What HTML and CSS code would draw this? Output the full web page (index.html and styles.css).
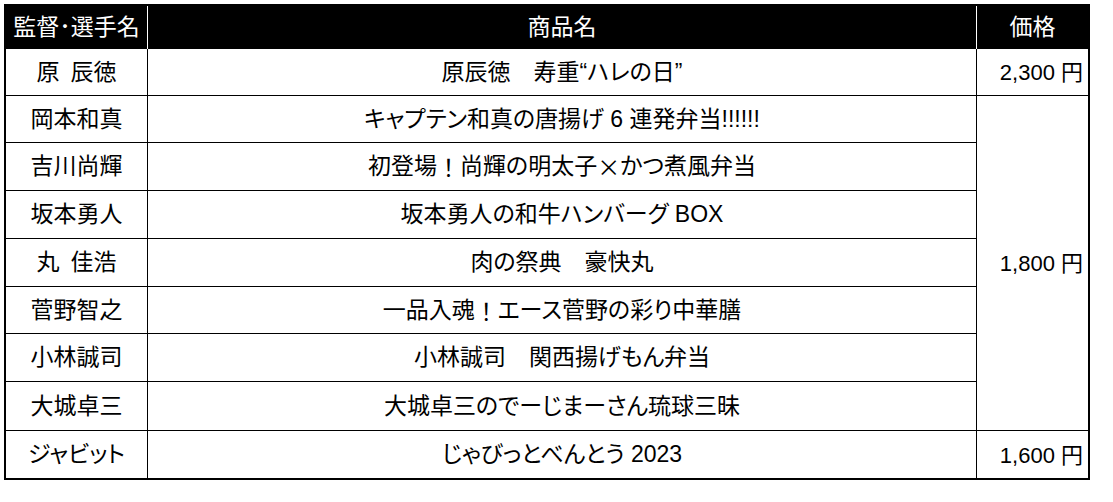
FILE: index.html
```html
<!DOCTYPE html>
<html lang="ja">
<head>
<meta charset="utf-8">
<title>弁当一覧</title>
<link rel="stylesheet" href="styles.css">
</head>
<body>
<div class="sheet">
  <div class="cell head">監督･選手名</div>
  <div class="cell head">商品名</div>
  <div class="cell head last">価格</div>

  <div class="cell name">原<span class="gap"> </span>辰徳</div>
  <div class="cell item">原辰徳　寿重“ハレの日”</div>
  <div class="cell price">2,300 円</div>

  <div class="cell name">岡本和真</div>
  <div class="cell item">キャプテン和真の唐揚げ 6 連発弁当!!!!!!</div>
  <div class="cell price span">1,800 円</div>

  <div class="cell name">吉川尚輝</div>
  <div class="cell item">初登場<span class="fw">！</span>尚輝の明太子<span class="fw">×</span>かつ煮風弁当</div>

  <div class="cell name">坂本勇人</div>
  <div class="cell item">坂本勇人の和牛ハンバーグ BOX</div>

  <div class="cell name">丸<span class="gap"> </span>佳浩</div>
  <div class="cell item">肉の祭典　豪快丸</div>

  <div class="cell name">菅野智之</div>
  <div class="cell item">一品入魂<span class="fw">！</span>エース菅野の彩り中華膳</div>

  <div class="cell name">小林誠司</div>
  <div class="cell item">小林誠司　関西揚げもん弁当</div>

  <div class="cell name">大城卓三</div>
  <div class="cell item">大城卓三のでーじまーさん琉球三昧</div>

  <div class="cell name bottom">ジャビット</div>
  <div class="cell item bottom">じゃびっとべんとう 2023</div>
  <div class="cell price bottom">1,600 円</div>
</div>
</body>
</html>
```

FILE: styles.css
```css
html, body {
  margin: 0;
  padding: 0;
  background: #ffffff;
}

body {
  padding: 4px;
  font-family: "Liberation Sans", "Noto Sans CJK JP", sans-serif;
  font-size: 23px;
  color: #000000;
}

.sheet {
  display: grid;
  width: max-content;
  grid-template-columns: 142px 829px 111px;
  grid-template-rows: 43px 47px 47px 48px 48px 48px 47px 48px 49px 47px;
  border: 2px solid #000000;
}

.cell {
  display: flex;
  align-items: center;
  justify-content: center;
  border-right: 1px solid #000000;
  border-bottom: 1px solid #000000;
  line-height: 1;
  white-space: nowrap;
  font-feature-settings: "palt" 1;
}

.head {
  background: #000000;
  color: #ffffff;
  border-right-color: #ffffff;
  border-bottom: none;
}

.head.last,
.price {
  border-right: none;
}

.price {
  justify-content: flex-end;
  padding-right: 5px;
  padding-top: 2px;
  font-size: 22px;
}

.span {
  grid-column: 3;
  grid-row: 3 / 10;
}

.bottom {
  border-bottom: none;
}

.gap {
  display: inline-block;
  width: 11px;
}

.fw {
  font-family: "Noto Sans CJK JP", sans-serif;
  font-feature-settings: normal;
}
```
